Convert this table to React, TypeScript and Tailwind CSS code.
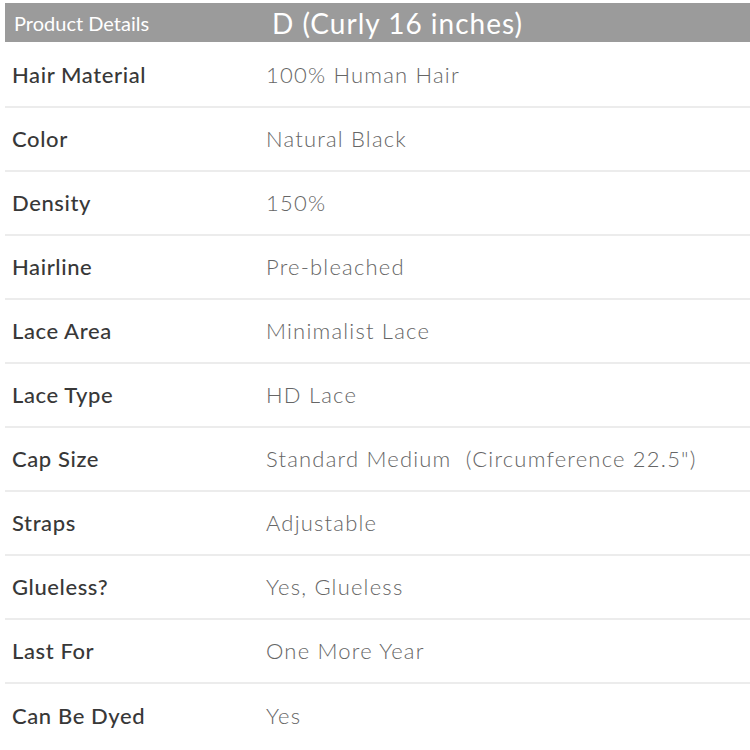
const rows: [string, string][] = [
  ['Hair Material', '100% Human Hair'],
  ['Color', 'Natural Black'],
  ['Density', '150%'],
  ['Hairline', 'Pre-bleached'],
  ['Lace Area', 'Minimalist Lace'],
  ['Lace Type', 'HD Lace'],
  ['Cap Size', 'Standard Medium\u00a0\u00a0(Circumference 22.5")'],
  ['Straps', 'Adjustable'],
  ['Glueless?', 'Yes, Glueless'],
  ['Last For', 'One More Year'],
  ['Can Be Dyed', 'Yes'],
];

export default function App() {
  return (
    <div className="w-[750px] h-[750px] overflow-hidden bg-white pt-[3px] pl-[5px] font-['Lato',sans-serif]">
      <div className="flex h-[39px] items-center bg-[#9b9b9b] text-white">
        <div className="w-[261px] pl-[9px] text-[20px] leading-none">Product Details</div>
        <div className="pl-[6px] text-[28px] tracking-[1px] leading-none">D (Curly 16 inches)</div>
      </div>
      <div className="mt-[2px]">
        {rows.map(([label, value], i) => (
          <div
            key={label}
            className={`flex h-[64px] items-center pb-[1px] ${i < rows.length - 1 ? 'border-b-2 border-[#ececec]' : ''}`}
          >
            <div className="w-[261px] pl-[7px] text-[22px] tracking-[0.6px] font-medium text-[#383838]">{label}</div>
            <div className="text-[22px] tracking-[1.2px] font-light text-[#666]">{value}</div>
          </div>
        ))}
      </div>
    </div>
  );
}
